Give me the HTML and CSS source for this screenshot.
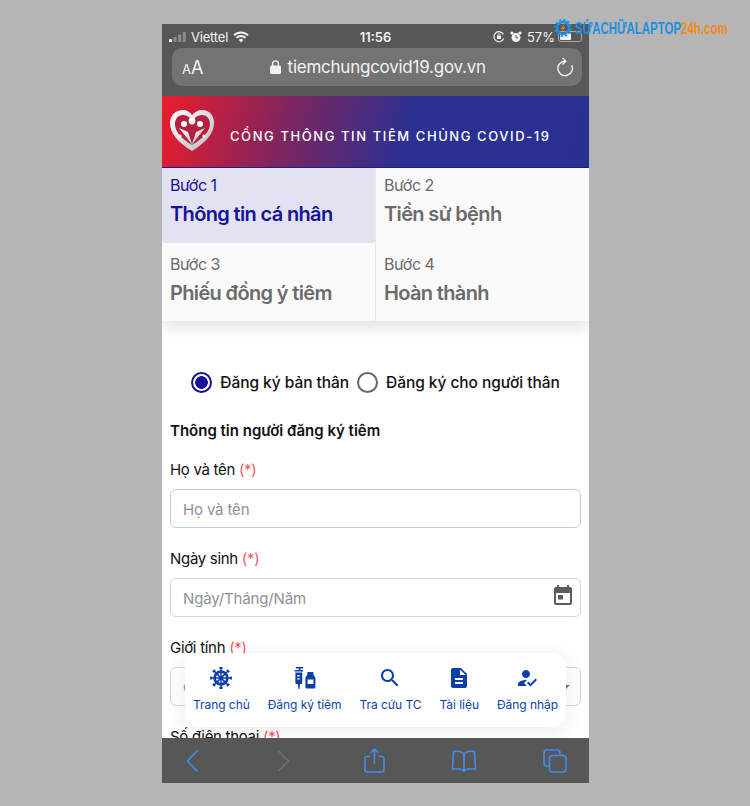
FILE: index.html
```html
<!DOCTYPE html>
<html lang="vi">
<head>
  <meta charset="UTF-8" />
  <meta name="viewport" content="width=device-width, initial-scale=1.0"/>
  <title>Cổng thông tin tiêm chủng COVID-19</title>
  <link rel="stylesheet" href="styles.css">
</head>
<body>
  <div class="watermark">
    <svg class="gear" viewBox="0 0 24 24" width="18" height="18">
      <circle cx="12" cy="12" r="8" fill="none" stroke="#1e8fe0" stroke-width="3.4"/>
      <circle cx="12" cy="12" r="10.6" fill="none" stroke="#1e8fe0" stroke-width="2.6" stroke-dasharray="3 2.55"/>
      <path d="M14 6l-5 7h3l-2 5 5-7h-3z" fill="#f28a1c"/>
    </svg>
    <div class="wm-text"><span class="wm-blue">SỬACHỮALAPTOP</span><span class="wm-orange">24h.com</span></div>
  </div>

  <div class="phone">
    <header class="browser-top">
      <div class="statusbar">
        <div class="status-left">
          <svg viewBox="0 0 17 10" width="17" height="10">
            <rect x="0" y="7" width="3" height="3" rx=".6" fill="#f2f2f2"/>
            <rect x="4.6" y="5" width="3" height="5" rx=".6" fill="#8c8c8c"/>
            <rect x="9.2" y="2.6" width="3" height="7.4" rx=".6" fill="#8c8c8c"/>
            <rect x="13.8" y="0" width="3" height="10" rx=".6" fill="#8c8c8c"/>
          </svg>
          <span>Viettel</span>
          <svg viewBox="0 0 16 12" width="16" height="12" fill="none" stroke="#f2f2f2" stroke-width="1.9">
            <path d="M1 4.4a10 10 0 0 1 14 0"/>
            <path d="M3.4 6.9a6.6 6.6 0 0 1 9.2 0"/>
            <path d="M8 11.4l-2.3-2.4a3.2 3.2 0 0 1 4.6 0z" fill="#f2f2f2" stroke="none"/>
          </svg>
        </div>
        <div class="status-time">11:56</div>
        <div class="status-right">
          <svg viewBox="0 0 12 12" width="12" height="12" fill="none" stroke="#f2f2f2" stroke-width="1.2">
            <path d="M10.6 7.6A5 5 0 1 1 10.4 3.4"/>
            <rect x="4" y="4.6" width="4" height="3.4" fill="#f2f2f2" stroke="none"/>
            <path d="M5 4.6V3.8a1 1 0 0 1 2 0v.8" stroke-width=".8"/>
          </svg>
          <svg viewBox="0 0 12 12" width="12" height="12">
            <circle cx="6" cy="6.6" r="4.5" fill="#f2f2f2"/>
            <circle cx="2" cy="2" r="1.6" fill="#f2f2f2"/>
            <circle cx="10" cy="2" r="1.6" fill="#f2f2f2"/>
            <path d="M6 4v2.8h2" fill="none" stroke="#575757" stroke-width="1"/>
          </svg>
          <span>57%</span>
          <div class="battery"><div class="battery-level"></div></div>
        </div>
      </div>
      <div class="urlbar">
        <div class="url-aa"><small>A</small>A</div>
        <div class="url-text">
          <svg viewBox="0 0 11 14" width="11" height="14">
            <rect x="0" y="5.6" width="11" height="8.4" rx="1.6" fill="#f2f2f2"/>
            <path d="M2.6 6V3.8a2.9 2.9 0 0 1 5.8 0V6" fill="none" stroke="#f2f2f2" stroke-width="1.4"/>
          </svg>
          <span>tiemchungcovid19.gov.vn</span>
        </div>
        <svg class="url-reload" viewBox="0 0 18 20" width="18" height="20" fill="none" stroke="#f2f2f2" stroke-width="1.4">
          <path d="M9 4.200A7.200 7.200 0 1 0 15.600 8.200"/>
          <path d="M6.600 1l3.200 3.200-3.200 3.200"/>
        </svg>
      </div>
    </header>

    <div class="banner">
      <svg class="banner-logo" viewBox="0 0 46 44" width="46" height="44">
        <defs>
          <linearGradient id="silver" x1="0" y1="0" x2="1" y2="1">
            <stop offset="0" stop-color="#ffffff"/>
            <stop offset="1" stop-color="#b9b9c0"/>
          </linearGradient>
        </defs>
        <path d="M23 42C10 34 1 25 1 14 1 6 7 1 14 1c4 0 7 2 9 5 3-3 6-5 10-5 7 0 12 5 12 13 0 11-9 20-22 28z" fill="url(#silver)"/>
        <path d="M23 36C13 30 6 23 6 15 6 9 10 6 14 6c4 0 7 2 9 6 3-4 6-6 10-6 4 0 8 3 8 9 0 8-8 15-18 21z" fill="#b3213f"/>
        <circle cx="15" cy="15" r="3" fill="#fff"/>
        <circle cx="31" cy="15" r="3" fill="#fff"/>
        <circle cx="23" cy="12" r="3.4" fill="#fff"/>
        <path d="M10 19l9 4 4 12 4-12 9-4-8 10-5 7-5-7z" fill="url(#silver)"/>
        <circle cx="11" cy="27" r="1.6" fill="#fff"/>
        <circle cx="35" cy="27" r="1.6" fill="#fff"/>
      </svg>
      <div class="banner-title">CỔNG THÔNG TIN TIÊM CHỦNG COVID-19</div>
    </div>

    <main class="page">
      <nav class="steps">
        <div class="step step-active">
          <div class="step-num">Bước 1</div>
          <div class="step-name">Thông tin cá nhân</div>
        </div>
        <div class="step">
          <div class="step-num">Bước 2</div>
          <div class="step-name">Tiền sử bệnh</div>
        </div>
        <div class="step">
          <div class="step-num">Bước 3</div>
          <div class="step-name">Phiếu đồng ý tiêm</div>
        </div>
        <div class="step">
          <div class="step-num">Bước 4</div>
          <div class="step-name">Hoàn thành</div>
        </div>
      </nav>

      <form class="form">
        <div class="radios">
          <label class="radio">
            <span class="radio-dot radio-on"></span>
            Đăng ký bản thân
          </label>
          <label class="radio">
            <span class="radio-dot"></span>
            Đăng ký cho người thân
          </label>
        </div>

        <h2 class="form-title">Thông tin người đăng ký tiêm</h2>

        <label class="field-label">Họ và tên <span class="req">(*)</span></label>
        <input class="field field-focus" type="text" placeholder="Họ và tên" />

        <label class="field-label">Ngày sinh <span class="req">(*)</span></label>
        <div class="field-wrap">
          <input class="field" type="text" placeholder="Ngày/Tháng/Năm" />
          <svg class="field-icon" viewBox="0 0 24 24" width="24" height="24" fill="#5c5c5c">
            <path d="M19 3h-1V1h-2v2H8V1H6v2H5c-1.1 0-2 .9-2 2v14c0 1.1.9 2 2 2h14c1.1 0 2-.9 2-2V5c0-1.1-.9-2-2-2zm0 16H5V9h14v10z"/>
            <rect x="7" y="11" width="5" height="4.5"/>
          </svg>
        </div>

        <label class="field-label">Giới tính <span class="req">(*)</span></label>
        <div class="field-wrap">
          <input class="field" type="text" placeholder="Chọn" />
          <span class="field-caret"></span>
        </div>

        <label class="field-label">Số điện thoại <span class="req">(*)</span></label>
      </form>

      <div class="bottom-nav">
        <a class="nav-item">
          <svg viewBox="0 0 24 24" width="24" height="24" fill="none" stroke="#0b3fa8" stroke-width="2">
            <circle cx="12" cy="12" r="6.4" stroke-width="2.6"/>
            <path d="M12 2v20M2 12h20M4.9 4.9l14.2 14.2M19.1 4.9L4.9 19.1" stroke-width="1.5"/>
            <path d="M10.4 2h3.2M10.4 22h3.2M2 10.4v3.2M22 10.4v3.2M3.8 6l2.2-2.2M18 3.8L20.2 6M3.8 18L6 20.2M18 20.2l2.2-2.2" stroke-width="1.8"/>
            <circle cx="12" cy="12" r="1.6" fill="#0b3fa8" stroke="none"/>
          </svg>
          <span>Trang chủ</span>
        </a>
        <a class="nav-item">
          <svg viewBox="0 0 24 24" width="24" height="24" fill="#0b3fa8">
            <path d="M3 1h7v1.6H7.4V4H10v1.6H1.6V4h4.2V2.600H3z"/>
            <path d="M2.400 6.600h6.800V17a1 1 0 0 1-1 1H7l-.6 5h-1l-.6-5H3.400a1 1 0 0 1-1-1zM4.200 9v1.400h2.600V9zm0 3.200v1.400h2.600v-1.400z" fill-rule="evenodd"/>
            <path d="M14.400 6h6v2.400l2 3V21a1.500 1.500 0 0 1-1.500 1.500h-7A1.500 1.500 0 0 1 12.400 21v-9.600l2-3zM14.600 13.400v4.600h5.800v-4.600z" fill-rule="evenodd"/>
          </svg>
          <span>Đăng ký tiêm</span>
        </a>
        <a class="nav-item">
          <svg viewBox="0 0 24 24" width="24" height="24" fill="#0b3fa8">
            <path d="M15.500 14h-.79l-.28-.27C15.410 12.590 16 11.110 16 9.500 16 5.910 13.090 3 9.500 3S3 5.910 3 9.500 5.910 16 9.500 16c1.610 0 3.090-.59 4.230-1.570l.27.28v.79l5 4.990L20.490 19l-4.990-5zm-6 0C7.010 14 5 11.990 5 9.500S7.010 5 9.500 5 14 7.010 14 9.500 11.990 14 9.500 14z"/>
          </svg>
          <span>Tra cứu TC</span>
        </a>
        <a class="nav-item">
          <svg viewBox="0 0 24 24" width="24" height="24" fill="#0b3fa8">
            <path d="M14 2H6c-1.100 0-1.990.9-1.990 2L4 20c0 1.100.89 2 1.990 2H18c1.100 0 2-.9 2-2V8l-6-6zm2 16H8v-2h8v2zm0-4H8v-2h8v2zm-3-5V3.500L18.500 9H13z"/>
          </svg>
          <span>Tài liệu</span>
        </a>
        <a class="nav-item">
          <svg viewBox="0 0 24 24" width="24" height="24" fill="#0b3fa8">
            <path d="M9 17l3-2.940c-.39-.04-.68-.06-1-.06-2.670 0-8 1.340-8 4v2h9l-3-3zm2-5c2.210 0 4-1.790 4-4s-1.790-4-4-4-4 1.790-4 4 1.790 4 4 4"/>
            <path d="M15.470 20.500L12 17l1.400-1.410 2.070 2.080 5.130-5.170 1.400 1.410z"/>
          </svg>
          <span>Đăng nhập</span>
        </a>
      </div>
    </main>

    <footer class="toolbar">
      <svg viewBox="0 0 24 24" width="24" height="24" fill="none" stroke="#3f8ef2" stroke-width="1.6">
        <path d="M17.500 1.500L7.500 12l10 10.500"/>
      </svg>
      <svg viewBox="-1 0 24 24" width="24" height="24" fill="none" stroke="#6e6e6e" stroke-width="1.6">
        <path d="M7.500 2l10 10-10 10"/>
      </svg>
      <svg viewBox="-1.500 0 24 26" width="24" height="26" fill="none" stroke="#3f8ef2" stroke-width="1.600">
        <path d="M8 8.500H4.500a2 2 0 0 0-2 2V22a2 2 0 0 0 2 2h15a2 2 0 0 0 2-2V10.500a2 2 0 0 0-2-2H16"/>
        <path d="M12 16V1.500M8 5l4-3.800L16 5"/>
      </svg>
      <svg viewBox="0 0 26 24" width="26" height="24" fill="none" stroke="#3f8ef2" stroke-width="1.600">
        <path d="M13 5C11 2.600 6 2 2.500 2.600L1.500 20c4-.6 8.500-.4 11.500 2 3-2.400 7.500-2.600 11.500-2L23.500 2.600C20 2 15 2.600 13 5zV22"/>
      </svg>
      <svg viewBox="0 0 24 24" width="24" height="24" fill="none" stroke="#3f8ef2" stroke-width="1.600">
        <rect x="1" y="1" width="16" height="16" rx="3"/>
        <rect x="6.500" y="6.500" width="16.500" height="16.500" rx="3" fill="#575757"/>
      </svg>
    </footer>
  </div>
</body>
</html>
```

FILE: styles.css
```css
* {
  box-sizing: border-box;
}
body {
  margin: 0;
  height: 806px;
  background: #b5b5b5;
  font-family: Inter, 'Noto Sans', sans-serif;
  padding-top: 24px;
  overflow: hidden;
}
.phone {
  width: 427px;
  height: 759px;
  margin-left: 162px;
  display: flex;
  flex-direction: column;
  background: #fff;
}

/* watermark */
.watermark {
  position: absolute;
  top: 17px;
  left: 554px;
  display: flex;
  align-items: center;
  z-index: 5;
}
.gear {
  margin-right: 3px;
}
.wm-text {
  font-family: 'Liberation Sans', sans-serif;
  font-weight: 700;
  font-size: 16.5px;
  line-height: 22px;
  white-space: nowrap;
  width: 152px;
  transform: scaleX(0.695);
  transform-origin: left center;
}
.wm-blue {
  color: #1e8fe0;
}
.wm-orange {
  color: #f28a1c;
}

/* safari top */
.browser-top {
  height: 72px;
  background: #575757;
  color: #f2f2f2;
  padding: 0 7px 0 10px;
  flex-shrink: 0;
}
.statusbar {
  height: 24px;
  display: flex;
  align-items: center;
  justify-content: space-between;
  position: relative;
  font-size: 13px;
  padding-top: 1px;
}
.status-left, .status-right {
  display: flex;
  align-items: center;
  gap: 5px;
}
.status-left {
  margin-left: -3px;
}
.status-left span {
  letter-spacing: -0.2px;
}
.status-time {
  position: absolute;
  left: 0;
  right: 0;
  text-align: center;
  margin-left: -3px;
  font-weight: 600;
}
.battery {
  width: 24px;
  height: 11px;
  margin-left: -2px;
  border: 1px solid #a8a8a8;
  border-radius: 3px;
  padding: 1px;
}
.battery-level {
  width: 57%;
  height: 100%;
  background: #f2f2f2;
  border-radius: 1px;
}
.urlbar {
  height: 38px;
  background: #737373;
  border-radius: 10px;
  display: flex;
  align-items: center;
  justify-content: space-between;
  padding: 0 8px 0 10px;
}
.url-aa {
  font-size: 18px;
}
.url-aa small {
  font-size: 13px;
}
.url-text {
  display: flex;
  align-items: center;
  gap: 7px;
  font-size: 17px;
  letter-spacing: -0.25px;
  margin-right: 4px;
}
.url-reload {
  flex-shrink: 0;
}

/* banner */
.banner {
  height: 72px;
  flex-shrink: 0;
  display: flex;
  align-items: center;
  gap: 15px;
  padding: 0 0 0 7px;
  background: linear-gradient(105deg, #ed1c2b 0%, #7c2560 30%, #2a3192 58%, #2a3092 100%);
  border-bottom: 1px solid #1a1f8c;
}
.banner-logo {
  margin-top: -2px;
}
.banner-title {
  color: #fff;
  font-size: 13px;
  font-weight: 500;
  letter-spacing: 1.58px;
  white-space: nowrap;
  margin-top: 8px;
}

/* steps */
.page {
  flex: 1;
  position: relative;
  overflow: hidden;
}
.steps {
  display: grid;
  grid-template-columns: 213px 214px;
  grid-template-rows: 75px 78px;
  background: #fafafa;
  box-shadow: 0 6px 14px rgba(0, 0, 0, 0.12);
}
.step {
  padding: 7px 8px 0;
  color: #6b6b6b;
  border-left: 1px solid #e6e6ee;
}
.step:nth-child(odd) {
  border-left: none;
}
.step-active {
  background: #e3e2f0;
  color: #16139b;
  border-radius: 0 0 3px 3px;
}
.step-num {
  font-size: 16px;
  line-height: 20px;
  letter-spacing: -0.5px;
}
.step-name {
  font-size: 20px;
  line-height: 26px;
  font-weight: 600;
  letter-spacing: -0.65px;
  margin-top: 6px;
}
.step:nth-child(n+3) {
  padding-top: 11px;
}

/* form */
.form {
  padding: 50px 8px 0;
}
.radios {
  display: flex;
  align-items: center;
  justify-content: center;
  gap: 8px;
  font-size: 15.5px;
  font-weight: 500;
  letter-spacing: -0.05px;
  color: #111;
  margin-bottom: 28px;
  height: 22px;
}
.radio {
  display: flex;
  align-items: center;
  gap: 8px;
}
.radio-dot {
  width: 21px;
  height: 21px;
  border: 2px solid #666;
  border-radius: 50%;
  flex-shrink: 0;
}
.radio-on {
  border-color: #16139b;
  background: radial-gradient(circle, #16139b 0 6px, #fff 6.6px);
}
.form-title {
  margin: 0 0 19px;
  font-size: 15px;
  line-height: 20px;
  font-weight: 600;
  color: #111;
}
.field-label {
  display: block;
  font-size: 15px;
  line-height: 20px;
  letter-spacing: -0.3px;
  color: #111;
  margin-bottom: 9px;
}
.req {
  color: #f0575f;
}
.field {
  display: block;
  width: 100%;
  height: 39px;
  padding: 1px 12px 0;
  border: 1.5px solid #d4d4dc;
  border-radius: 6px;
  font: 15px Inter, sans-serif;
  letter-spacing: -0.15px;
  background: #fff;
  outline: none;
  margin-bottom: 21px;
}
.field::placeholder {
  color: #8d9097;
}
.field-focus {
  border-color: #c3c8ee;
}
.field-wrap {
  position: relative;
}
.field-icon {
  position: absolute;
  right: 6px;
  top: 6px;
}
.field-caret {
  position: absolute;
  right: 11px;
  top: 18px;
  border: 4px solid transparent;
  border-top-color: #777;
}

/* floating nav */
.bottom-nav {
  position: absolute;
  left: 23px;
  top: 485px;
  width: 381px;
  height: 74px;
  background: #fff;
  border-radius: 14px;
  box-shadow: 0 4px 20px rgba(60, 60, 120, 0.1);
  display: flex;
  justify-content: center;
  gap: 18px;
  padding-top: 13px;
}
.nav-item {
  display: flex;
  flex-direction: column;
  align-items: center;
  gap: 7px;
  color: #0b3fa8;
  font-size: 12px;
  line-height: 16px;
  letter-spacing: -0.05px;
  white-space: nowrap;
}

/* safari bottom */
.toolbar {
  height: 45px;
  flex-shrink: 0;
  background: #575757;
  display: flex;
  align-items: center;
  justify-content: space-between;
  padding: 0 22px 0 18px;
}
```
